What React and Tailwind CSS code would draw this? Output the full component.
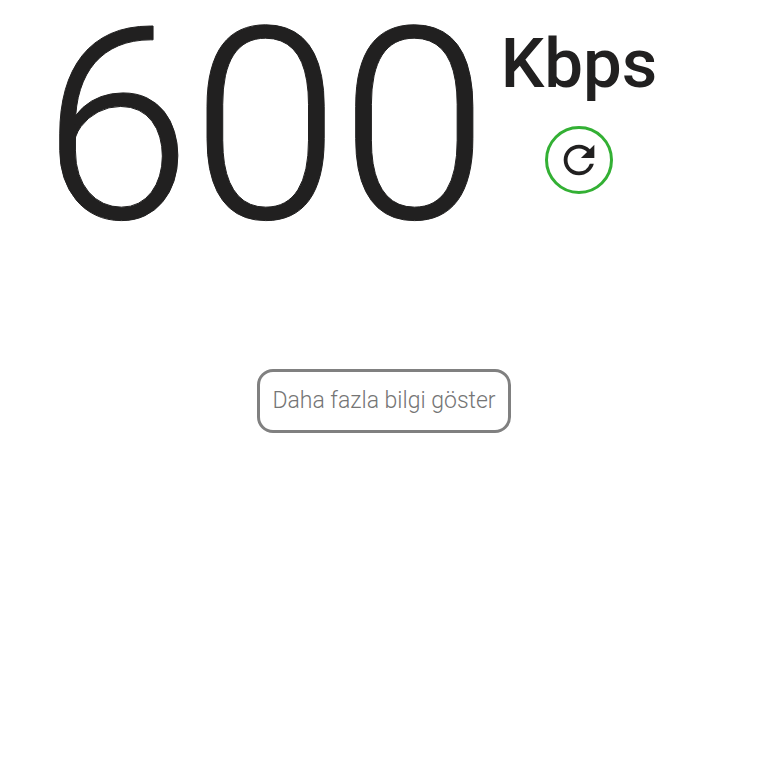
import React from 'react';
import { MdRefresh } from 'react-icons/md';

const App = () => (
  <main className="min-h-screen bg-white font-['Roboto',sans-serif] text-[#212020]">
    {/* Speed result */}
    <section className="flex justify-center gap-3 pr-17">
      <div className="text-[268px] font-light leading-[252px] [-webkit-text-stroke:1px_#212020]">600</div>
      <div className="flex flex-col items-center pt-6">
        <div className="text-[69px] font-medium leading-[80px]">Kbps</div>
        <button
          type="button"
          aria-label="Yenile"
          className="mt-[22px] flex size-[68px] items-center justify-center rounded-full border-3 border-[#33b034]"
        >
          <MdRefresh size={46} />
        </button>
      </div>
    </section>

    <div className="mt-[117px] flex justify-center">
      <button
        type="button"
        className="h-16 rounded-2xl border-3 border-[#808080] px-3 text-[23px] font-light text-[#757575]"
      >
        Daha fazla bilgi göster
      </button>
    </div>
  </main>
);

export default App;
